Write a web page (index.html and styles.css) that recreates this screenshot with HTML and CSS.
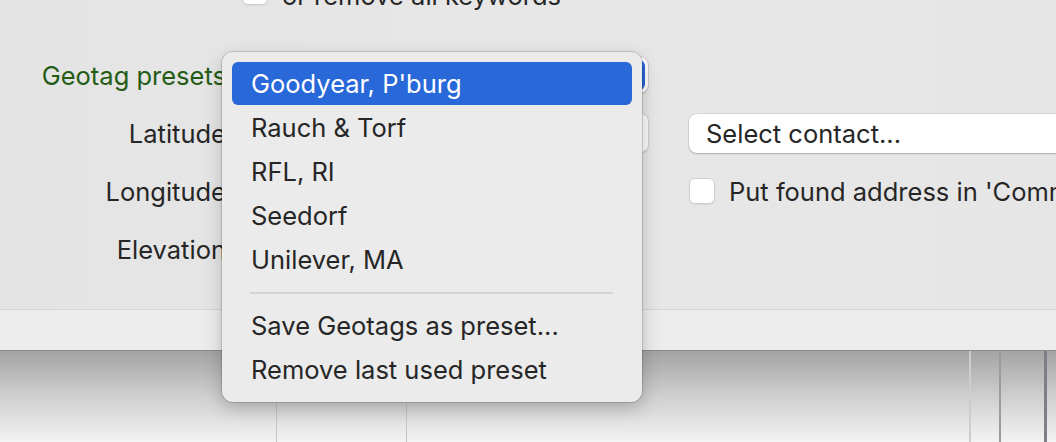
FILE: index.html
```html
<!DOCTYPE html>
<html>
<head>
<meta charset="utf-8">
<link rel="stylesheet" href="styles.css">
</head>
<body>
<div class="window">
  <div class="pane">
    <div class="top-row">
      <span class="checkbox"></span>
      <span class="text">or remove all keywords</span>
    </div>
    <div class="form">
      <div class="label green">Geotag presets</div>
      <div class="popup"><span class="popup-arrow"></span></div>
      <div></div>
      <div></div>

      <div class="label">Latitude</div>
      <div class="field"></div>
      <div></div>
      <div class="select">Select contact...</div>

      <div class="label">Longitude</div>
      <div class="field short"></div>
      <div></div>
      <div class="check-row"><span class="checkbox"></span><span class="text">Put found address in 'Comments'</span></div>

      <div class="label">Elevation</div>
      <div class="field short"></div>
      <div></div>
      <div></div>
    </div>
  </div>
  <div class="band"></div>
  <div class="table">
    <div class="col c1"></div>
    <div class="col c2"></div>
    <div class="col c3"></div>
    <div class="col c4"></div>
    <div class="col c5"></div>
    <div class="col c6"></div>
  </div>

  <div class="menu">
    <div class="item selected">Goodyear, P'burg</div>
    <div class="item">Rauch &amp; Torf</div>
    <div class="item">RFL, RI</div>
    <div class="item">Seedorf</div>
    <div class="item">Unilever, MA</div>
    <div class="sep"></div>
    <div class="item">Save Geotags as preset...</div>
    <div class="item">Remove last used preset</div>
  </div>
</div>
</body>
</html>
```

FILE: styles.css
```css
* { box-sizing: border-box; }
html, body {
  margin: 0;
  padding: 0;
  width: 1056px;
  height: 442px;
  overflow: hidden;
}
body {
  font-family: Inter, "Liberation Sans", sans-serif;
  color: #262626;
  background: #e6e6e6;
}
.window {
  position: relative;
  width: 1056px;
  height: 442px;
  overflow: hidden;
}
.pane {
  height: 309px;
  background: linear-gradient(90deg, #e4e4e4 0%, #e7e7e7 50%, #e6e6e6 100%);
  overflow: hidden;
}
.top-row {
  display: flex;
  align-items: center;
  gap: 14px;
  height: 30px;
  margin-top: -24px;
  padding-left: 242px;
  font-size: 25.5px;
}
.top-row .text { position: relative; top: 4px; }
.checkbox {
  display: inline-block;
  width: 24px;
  height: 24px;
  background: #fff;
  border: 1px solid #cfcfcf;
  border-radius: 6px;
  box-shadow: 0 1px 1px rgba(0,0,0,0.06);
  flex: none;
}
.top-row .checkbox { position: relative; top: 2px; width: 26px; }
.form {
  display: grid;
  grid-template-columns: 232px 416px 41px 420px;
  grid-auto-rows: 38px;
  row-gap: 20px;
  margin-top: 50px;
  font-size: 25.5px;
}
.label {
  text-align: right;
  align-self: center;
  white-space: nowrap;
  padding-right: 6px;
  color: #262626;
}
.label.green { color: #245c16; }
.popup {
  height: 36px;
  margin-top: 1px;
  background: #fdfdfd;
  border-radius: 8px;
  box-shadow: 0 0 0 1px rgba(0,0,0,0.08), 0 1px 2px rgba(0,0,0,0.2);
  position: relative;
}
.popup-arrow {
  position: absolute;
  right: 3px;
  top: 3px;
  width: 30px;
  height: 30px;
  border-radius: 6px;
  background: #2a67d8;
}
.field {
  height: 38px;
  background: #fbfbfb;
  border-radius: 7px;
  box-shadow: 0 0 0 1px rgba(0,0,0,0.06), 0 1px 2px rgba(0,0,0,0.18);
}
.field.short { width: 380px; }
.select {
  height: 39px;
  background: #fff;
  border-radius: 8px;
  box-shadow: 0 0 0 1px rgba(0,0,0,0.06), 0 1px 2px rgba(0,0,0,0.22);
  padding-left: 17px;
  display: flex;
  align-items: center;
  white-space: nowrap;
}
.check-row {
  display: flex;
  align-items: center;
  gap: 14px;
  white-space: nowrap;
}
.check-row .checkbox { width: 26px; height: 26px; }

.band {
  height: 42px;
  background: #ececec;
  border-top: 1px solid #d6d6d6;
  border-bottom: 1px solid #8a8a8a;
}
.table {
  display: flex;
  height: 91px;
  background: linear-gradient(180deg, #a3a3a3 0%, #cfcfcf 50%, #f3f3f3 100%);
}
.col { height: 100%; flex: none; }
.c1 { width: 277px; border-right: 1px solid #c4c4c4; }
.c2 { width: 130px; border-right: 1px solid #c4c4c4; }
.c3 { width: 564px; border-right: 2px solid #cdcdcd; }
.c4 { width: 30px; border-right: 2px solid #9b9b9b; }
.c5 { width: 46px; border-right: 3px solid #7e7e88; }
.c6 { flex: 1; }

.menu {
  position: absolute;
  left: 222px;
  top: 52px;
  width: 420px;
  height: 350px;
  padding: 10px 10px;
  background: #ebebeb;
  border-radius: 11px;
  box-shadow: 0 0 0 1px rgba(0,0,0,0.14), 0 6px 18px rgba(0,0,0,0.22);
  font-size: 25.5px;
}
.item {
  height: 44px;
  line-height: 44px;
  padding-left: 19px;
  border-radius: 6px;
  color: #262626;
  white-space: nowrap;
}
.item.selected {
  background: #2968d9;
  color: #fff;
  height: 43px;
  line-height: 43px;
  margin-bottom: 1px;
}
.sep {
  height: 22px;
  position: relative;
}
.sep::after {
  content: "";
  position: absolute;
  left: 18px;
  right: 19px;
  top: 10px;
  height: 2px;
  background: #d4d4d4;
}
```
